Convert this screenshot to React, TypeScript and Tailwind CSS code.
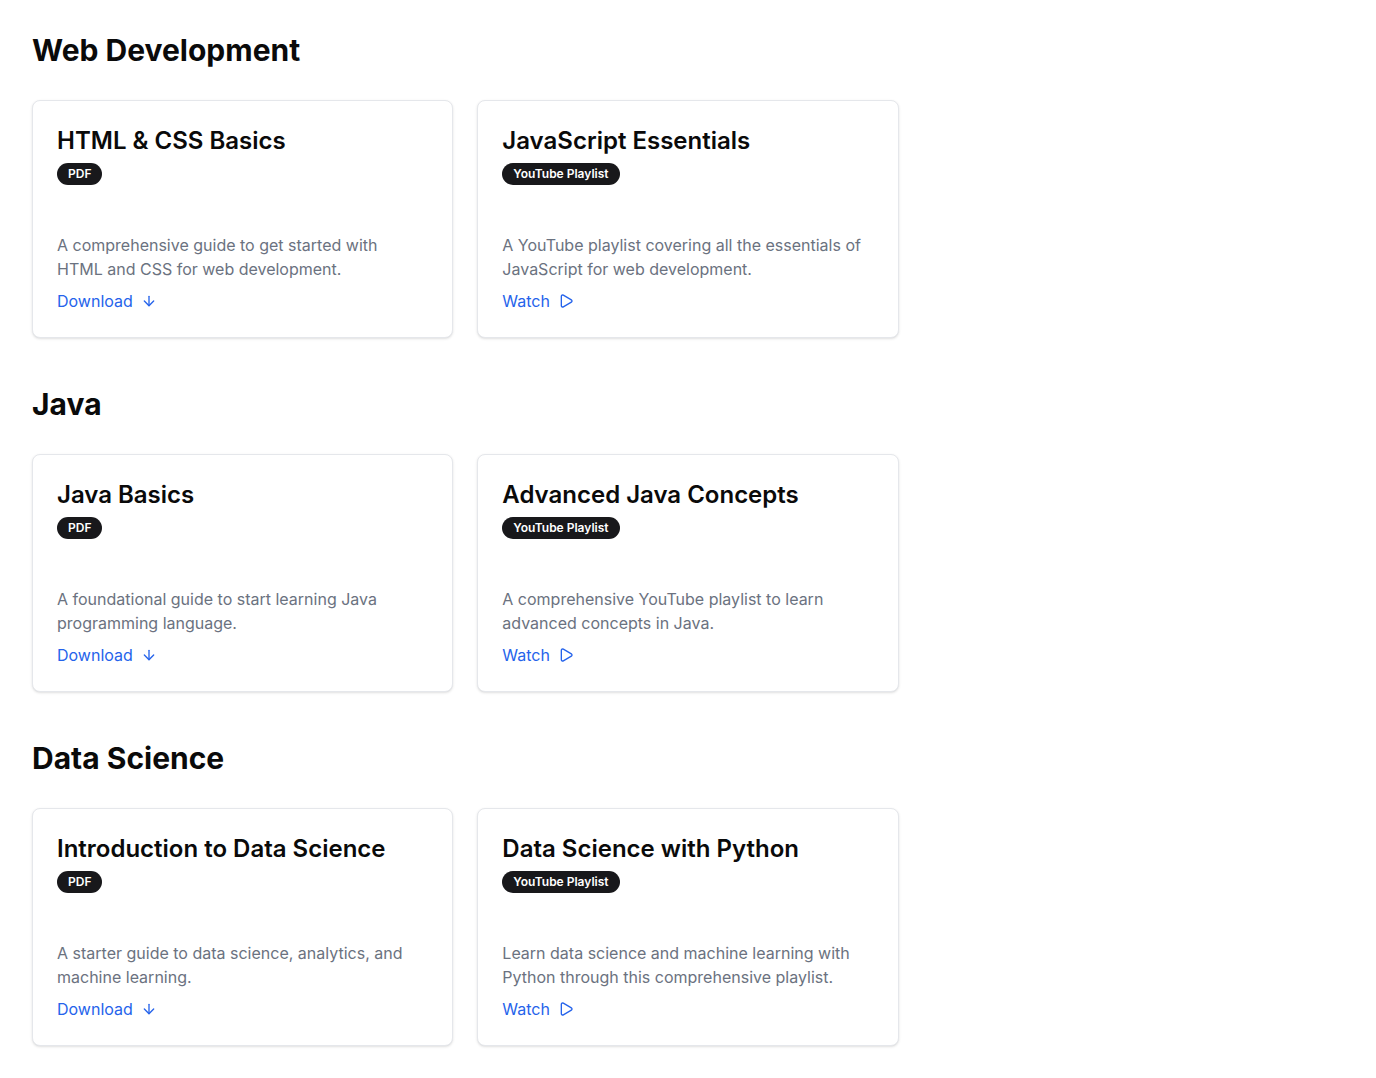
import { ArrowDown, Play } from "lucide-react";

type Resource = {
  title: string;
  type: "PDF" | "YouTube Playlist";
  description: string;
};

const sections: { name: string; items: Resource[] }[] = [
  {
    name: "Web Development",
    items: [
      {
        title: "HTML & CSS Basics",
        type: "PDF",
        description: "A comprehensive guide to get started with HTML and CSS for web development.",
      },
      {
        title: "JavaScript Essentials",
        type: "YouTube Playlist",
        description: "A YouTube playlist covering all the essentials of JavaScript for web development.",
      },
    ],
  },
  {
    name: "Java",
    items: [
      {
        title: "Java Basics",
        type: "PDF",
        description: "A foundational guide to start learning Java programming language.",
      },
      {
        title: "Advanced Java Concepts",
        type: "YouTube Playlist",
        description: "A comprehensive YouTube playlist to learn advanced concepts in Java.",
      },
    ],
  },
  {
    name: "Data Science",
    items: [
      {
        title: "Introduction to Data Science",
        type: "PDF",
        description: "A starter guide to data science, analytics, and machine learning.",
      },
      {
        title: "Data Science with Python",
        type: "YouTube Playlist",
        description: "Learn data science and machine learning with Python through this comprehensive playlist.",
      },
    ],
  },
];

export default function App() {
  return (
    <div className="min-h-screen bg-white p-8 font-['Inter',sans-serif] text-[#0a0a0a]">
      <div className="flex flex-col gap-12">
        {sections.map((section) => (
          <section key={section.name}>
            <h2 className="mb-8 text-3xl font-bold">{section.name}</h2>
            <div className="grid grid-cols-3 gap-6">
              {section.items.map((item) => (
                <ResourceCard key={item.title} item={item} />
              ))}
            </div>
          </section>
        ))}
      </div>
    </div>
  );
}

function ResourceCard({ item }: { item: Resource }) {
  const isPdf = item.type === "PDF";
  return (
    <div className="rounded-lg border border-gray-200 bg-white p-6 shadow-sm">
      <h3 className="text-2xl font-semibold">{item.title}</h3>
      <span className="mt-1.5 inline-flex items-center rounded-full border border-transparent bg-[#18181b] px-2.5 py-0.5 text-xs font-semibold text-white">
        {item.type}
      </span>
      <p className="mt-12 pr-2 text-base leading-6 text-[#6b7280]">{item.description}</p>
      <a href="#" className="mt-2 inline-flex items-center text-base leading-6 text-[#2563eb]">
        {isPdf ? "Download" : "Watch"}
        {isPdf ? <ArrowDown className="ml-2 h-4 w-4" /> : <Play className="ml-2 h-4 w-4" />}
      </a>
    </div>
  );
}
